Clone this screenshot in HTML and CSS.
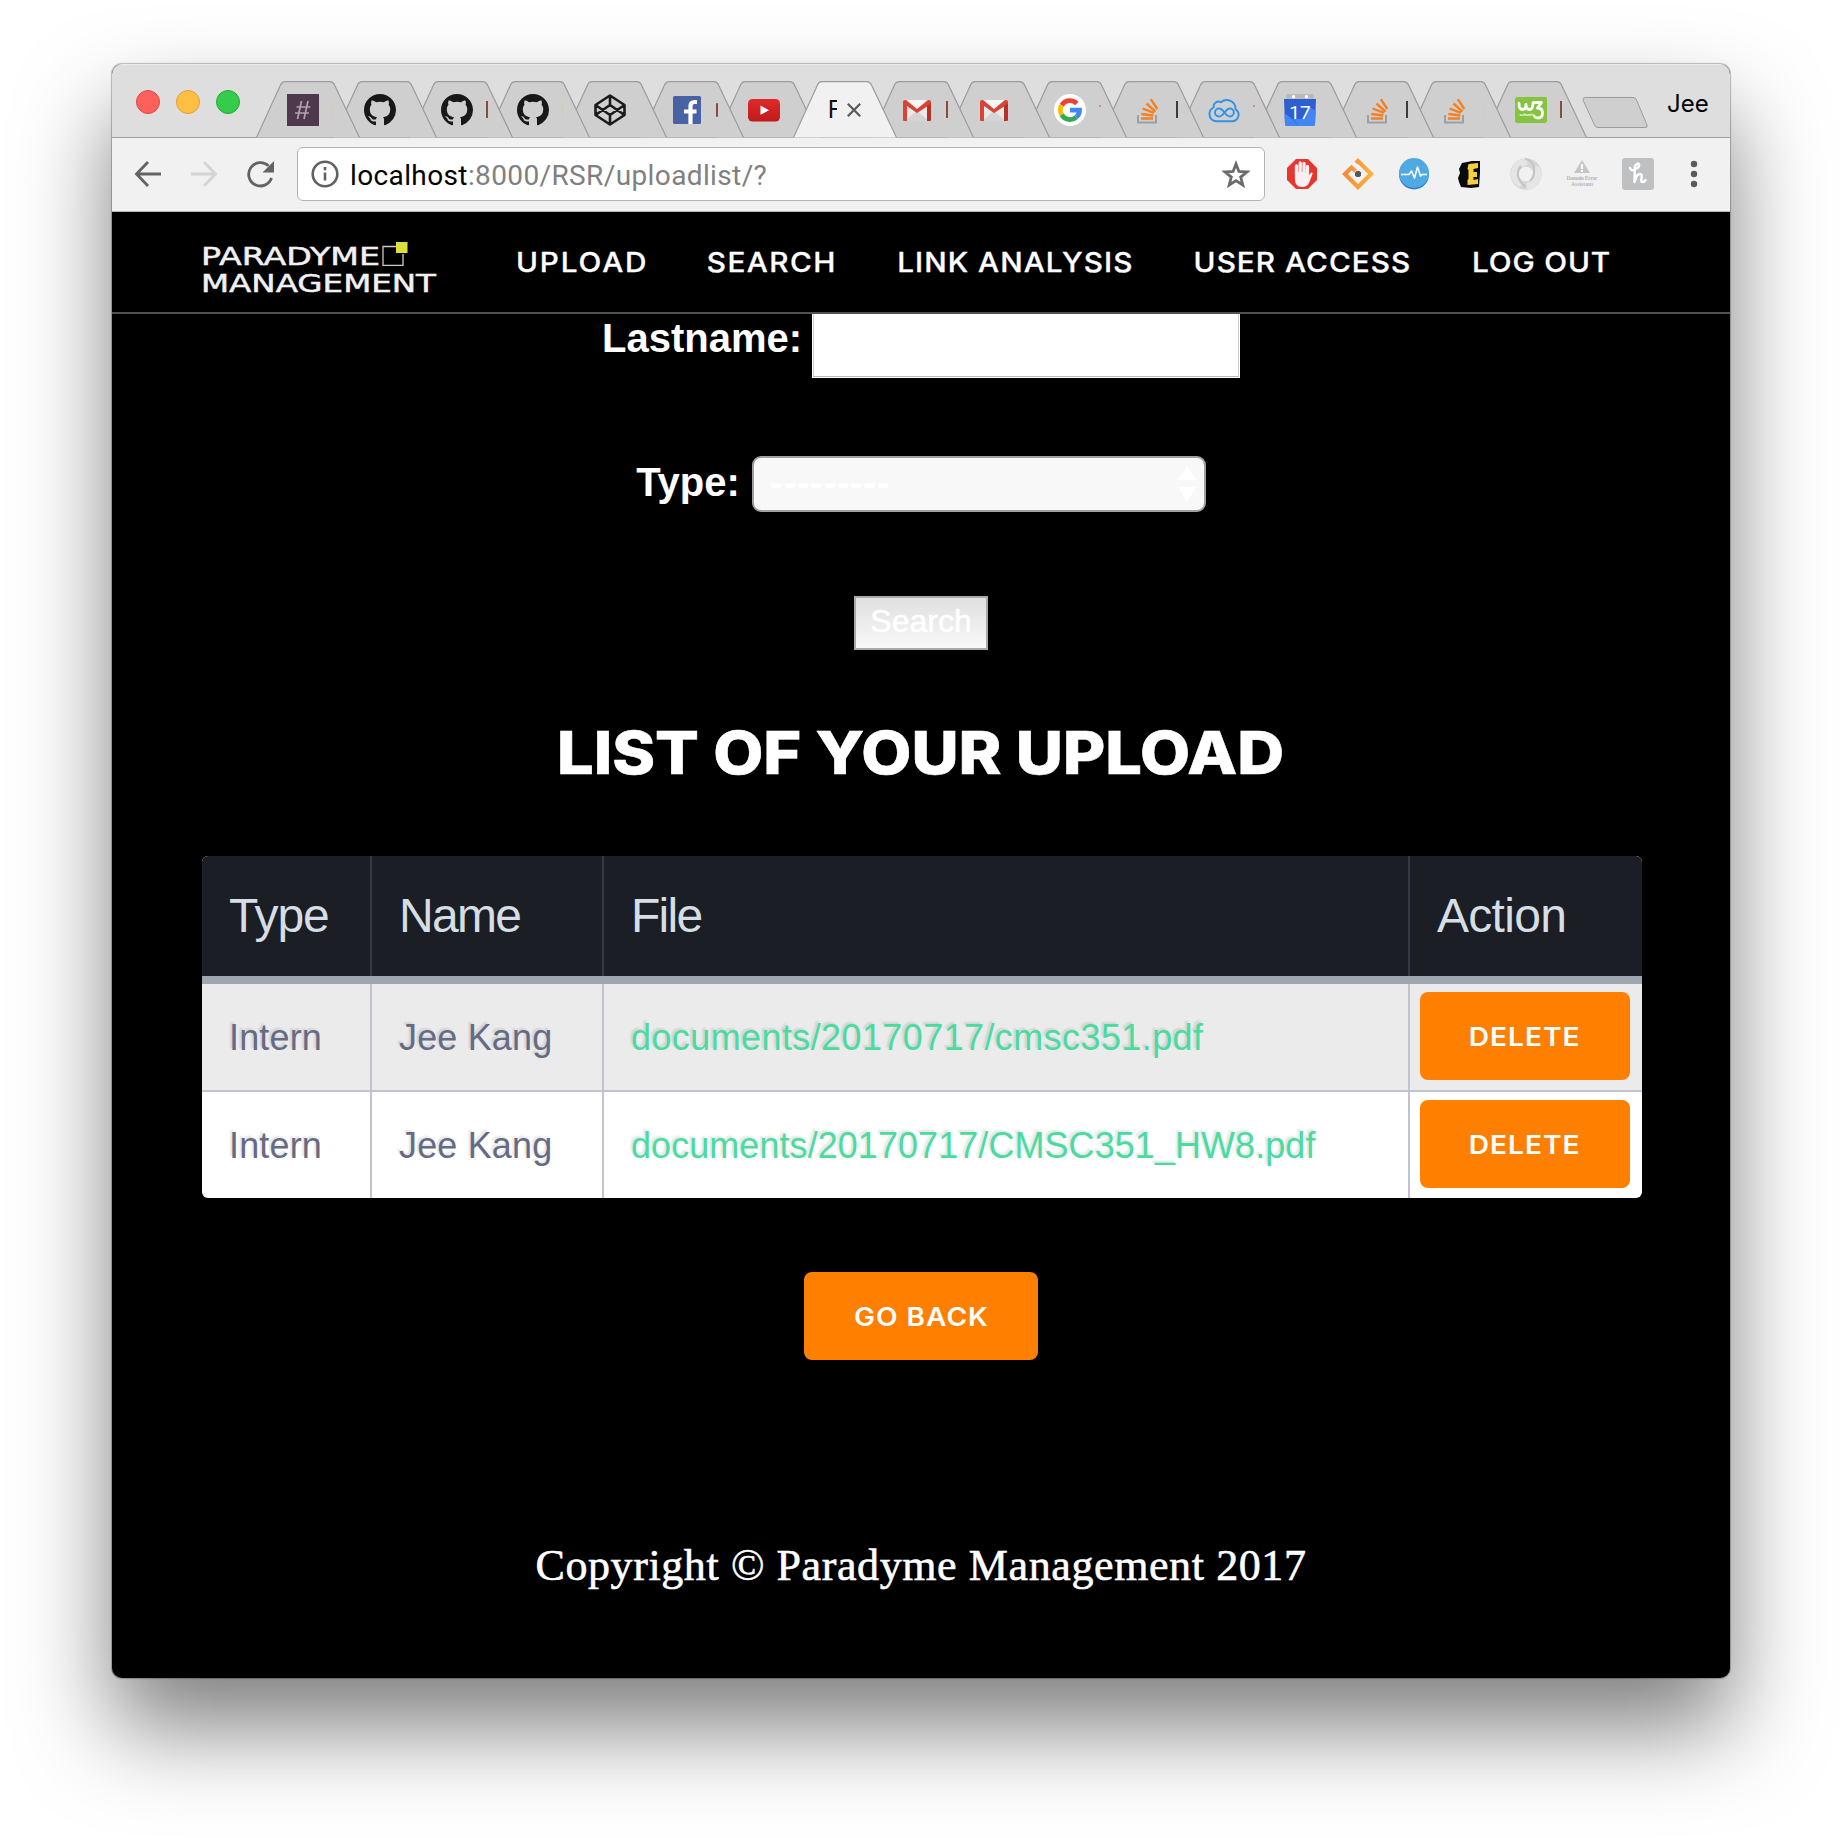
FILE: index.html
```html
<!DOCTYPE html>
<html lang="en">
<head>
<meta charset="utf-8">
<title>RSR</title>
<link rel="stylesheet" href="styles.css">
</head>
<body>
<svg class="defs" width="0" height="0">
  <defs>
    <symbol id="tab" viewBox="0 0 104 57"><path d="M0.5 56.5 L24.5 4 Q26 .7 29 .7 H74 Q77 .7 78.500 4 L103.500 56.500" /></symbol>
    <symbol id="github" viewBox="0 0 16 16"><path fill="#191717" fill-rule="evenodd" d="M8 0C3.580 0 0 3.580 0 8c0 3.540 2.290 6.530 5.470 7.590.4.070.55-.170.55-.380 0-.190-.010-.820-.010-1.490-2.010.37-2.530-.490-2.690-.940-.090-.230-.480-.940-.820-1.130-.280-.150-.680-.520-.010-.530.630-.010 1.080.580 1.230.820.720 1.210 1.870.870 2.330.660.070-.520.280-.870.510-1.070-1.780-.2-3.640-.890-3.640-3.950 0-.870.310-1.590.820-2.150-.080-.2-.360-1.020.080-2.120 0 0 .670-.210 2.200.820.640-.180 1.320-.270 2-.270.680 0 1.360.090 2 .270 1.530-1.040 2.200-.820 2.200-.820.440 1.100.160 1.920.080 2.120.510.560.820 1.270.820 2.150 0 3.070-1.870 3.750-3.650 3.950.290.250.540.730.540 1.480 0 1.070-.010 1.930-.010 2.200 0 .210.150.460.550.380A8.013 8.013 0 0 0 16 8c0-4.420-3.580-8-8-8z"/></symbol>
    <symbol id="gmail" viewBox="0 0 32 32"><path fill="#e9e9e9" d="M4 6h24v21H4z"/><path fill="#d4d4d4" d="M4 27l12-10 12 10z"/><path fill="#f6f6f6" d="M6 6h20L16 16z"/><path fill="#d94336" d="M2 8q0-2 2-2h1l11 9L27 6h1q2 0 2 2v2L16 19 6 12v15H3q-1 0-1-1z"/><path fill="#b93027" d="M26 12l4-3v17q0 1-1 1h-3z"/></symbol>
    <symbol id="stack" viewBox="0 0 32 32"><path fill="none" stroke="#9aa0a8" stroke-width="2" d="M7 21v7.500h18V21"/><path fill="none" stroke="#f48024" stroke-width="2.400" d="M10 24.500h12M10.300 20l12 1.500M11.600 14.500l11.300 4.300M15.500 9.500l9 8.200M19.800 5.200l6.500 9.800"/></symbol>
  </defs>
</svg>

<div class="window">
  <header class="tabstrip">
    <div class="lights"><i class="light red"></i><i class="light yellow"></i><i class="light green"></i></div>
    <div class="tabs">
      <div class="tab"><svg class="shape"><use href="#tab"/></svg><svg class="fav" viewBox="0 0 32 32"><path fill="#4d394b" d="M0 0h32v32H0z"/><path stroke="#b49fb2" stroke-width="1.700" d="M14.500 7l-4 18M21 7l-4 18M9.500 13h14M8 19h14"/></svg><i class="sliver faint"></i></div>
      <div class="tab"><svg class="shape"><use href="#tab"/></svg><svg class="fav"><use href="#github"/></svg></div>
      <div class="tab"><svg class="shape"><use href="#tab"/></svg><svg class="fav"><use href="#github"/></svg><i class="sliver rust"></i></div>
      <div class="tab"><svg class="shape"><use href="#tab"/></svg><svg class="fav"><use href="#github"/></svg><i class="sliver faint"></i></div>
      <div class="tab"><svg class="shape"><use href="#tab"/></svg><svg class="fav" viewBox="0 0 32 32"><path fill="none" stroke="#1b1b1b" stroke-width="2.600" stroke-linejoin="round" d="M16 1.500L30.500 11v10L16 30.500 1.500 21V11zM16 1.500V11M16 21v9.500M1.500 11L16 21l14.500-10M1.500 21L16 11l14.500 10"/></svg></div>
      <div class="tab"><svg class="shape"><use href="#tab"/></svg><svg class="fav" viewBox="0 0 32 32"><rect x="2" y="2" width="28" height="28" rx="1.500" fill="#4862a3"/><path fill="none" stroke="#fff" stroke-width="4.200" d="M19.500 30V12q0-4 4-4h2.500M13 17.500h12.500"/></svg><i class="sliver rust short"></i></div>
      <div class="tab"><svg class="shape"><use href="#tab"/></svg><svg class="fav" viewBox="0 0 32 32"><defs><linearGradient id="yt" x2="0" y2="1"><stop stop-color="#e02a29"/><stop offset="1" stop-color="#c01a1e"/></linearGradient></defs><rect y="5" width="32" height="22.500" rx="4.500" fill="url(#yt)"/><path fill="#fff" d="M12.500 11.500l8.500 4.700-8.500 4.600z"/></svg></div>
      <div class="tab active"><svg class="shape"><use href="#tab"/></svg><span class="title">F</span><svg class="close" viewBox="0 0 14 14"><path d="M.8.8l12.400 12.400M13.200.8L.8 13.200"/></svg></div>
      <div class="tab"><svg class="shape"><use href="#tab"/></svg><svg class="fav"><use href="#gmail"/></svg><i class="sliver rust"></i></div>
      <div class="tab"><svg class="shape"><use href="#tab"/></svg><svg class="fav"><use href="#gmail"/></svg></div>
      <div class="tab"><svg class="shape"><use href="#tab"/></svg><svg class="fav" viewBox="0 0 32 32"><circle cx="16" cy="16" r="16" fill="#fff"/><g fill="none" stroke-width="4.800"><path stroke="#ea4335" d="M22.800 9.500A9.600 9.600 0 0 0 7.700 11.200"/><path stroke="#fbbc05" d="M7.700 11.200a9.600 9.600 0 0 0 0 9.600"/><path stroke="#34a853" d="M7.700 20.800a9.600 9.600 0 0 0 14.600 2.400"/><path stroke="#4285f4" d="M22.300 23.200A9.300 9.300 0 0 0 25.500 16.200H16"/></g></svg><i class="sliver dot"></i></div>
      <div class="tab"><svg class="shape"><use href="#tab"/></svg><svg class="fav"><use href="#stack"/></svg><i class="sliver dark"></i></div>
      <div class="tab"><svg class="shape"><use href="#tab"/></svg><svg class="fav" viewBox="0 0 32 32"><g fill="none" stroke="#2f93ea" stroke-width="1.900"><path d="M8 27.200h16.500a6.500 6.500 0 0 0 3-12A8.800 8.800 0 0 0 13 8.200a5 5 0 0 0-7.300 5.300A7.200 7.200 0 0 0 8 27.200z"/><path d="M16.500 18.500q-3-4-5.500-4a4 4 0 0 0 0 8q2.500 0 5.500-4t5.300-4a4 4 0 0 1 0 8q-2.300 0-5.300-4z"/></g></svg><i class="sliver dot"></i></div>
      <div class="tab"><svg class="shape"><use href="#tab"/></svg><svg class="fav" viewBox="0 0 32 32"><path fill="#b9bbbd" d="M2 2q0-2 2-2h24q2 0 2 2v4H2z"/><path fill="#2e5fd0" d="M0 5h32l-1 25q0 2-2 2H3q-2 0-2-2z"/><path fill="#4285f4" d="M.5 19L8 25l7 7H3q-2 0-2-2zM24 12l7.700 5L31 30q0 2-2 2H15l-6-7h13z"/><circle cx="9.500" cy="2.700" r="1.700" fill="#fff"/><circle cx="22.500" cy="2.700" r="1.700" fill="#fff"/><text x="16" y="25" text-anchor="middle" class="cal">17</text></svg></div>
      <div class="tab"><svg class="shape"><use href="#tab"/></svg><svg class="fav"><use href="#stack"/></svg><i class="sliver dark"></i></div>
      <div class="tab"><svg class="shape"><use href="#tab"/></svg><svg class="fav"><use href="#stack"/></svg><i class="sliver faint"></i></div>
      <div class="tab"><svg class="shape"><use href="#tab"/></svg><svg class="fav" viewBox="0 0 32 32"><rect y="3" width="32" height="26" rx="2" fill="#86c440"/><path fill="none" stroke="#fff" stroke-width="2.800" stroke-linecap="round" stroke-linejoin="round" d="M4 9.500q0 6 3.500 6t3.500-5q0 5 3.500 5t3.500-6.500M19.500 8.500h7L22.500 14q5 0 5 5t-4.500 5q-2.500 0-3.500-1.500"/><text x="4.500" y="21.500" class="w3">schools</text></svg><i class="sliver rust"></i></div>
    </div>
    <svg class="newtab" width="66" height="32" viewBox="0 0 66 32"><path fill="#cfcfcf" stroke="#9b9b9b" d="M3.500.5H51q2.500 0 3.500 2.500l10.500 25q1 2.500-2 2.500H16q-2.500 0-3.500-2.500L1 3Q.5.500 3.500.5z"/></svg>
    <span class="profile">Jee</span>
  </header>

  <div class="toolbar">
    <svg class="nav-icon" viewBox="0 0 28 28"><path d="M27 14H3M14 2L2.500 14 14 26"/></svg>
    <svg class="nav-icon off" viewBox="0 0 28 28"><path d="M1 14h24M14 2l11.500 12L14 26"/></svg>
    <svg class="nav-icon" viewBox="0 0 28 28"><path d="M25.500 18A11.700 11.700 0 1 1 22.500 5.800"/><path class="solid" d="M28 1v11.500H16.500z"/></svg>
    <div class="omnibox">
      <svg class="info" viewBox="0 0 28 28"><circle cx="14" cy="14" r="12.300"/><path d="M14 12.500v8M14 7v3.200"/></svg>
      <span class="url">localhost<span class="rest">:8000/RSR/uploadlist/?</span></span>
      <svg class="star" viewBox="0 0 30 29"><path d="M15 4l2.900 7.500 8.100.4-6.300 5.200 2.100 7.900-6.800-4.400L8.200 25l2.100-7.900L4 11.900l8.100-.4z"/></svg>
    </div>
    <div class="extensions">
      <svg viewBox="0 0 32 32"><path fill="#e8352e" d="M10 1h12l9 9v12l-9 9H10l-9-9V10z"/><path fill="none" stroke="#f6f1f0" stroke-width="3.300" stroke-linecap="round" d="M10.500 17V8M14.200 15V5M18 15V5.500M21.500 17V8.500"/><path fill="#f6f1f0" d="M8.900 14h14.200v3.500l1.600-2.500q1.500-1 2 .5L23 25q-2 4-7 4-7 0-7.100-8z"/></svg>
      <svg viewBox="0 0 32 32"><defs><linearGradient id="dia" x2="1"><stop stop-color="#f58a3c"/><stop offset="1" stop-color="#fbb040"/></linearGradient></defs><path fill="none" stroke="url(#dia)" stroke-width="4.200" d="M14 5L16 3l13 13-13 13L3 16l6.500-6.500 4 3.500"/><path fill="#58595b" d="M14.500 13h3l1.500 1.500v3L17.500 19h-3L13 17.500v-3z"/></svg>
      <svg viewBox="0 0 32 32"><circle cx="16" cy="16.500" r="15" fill="#2d80bb"/><circle cx="16" cy="15" r="15" fill="#4faae3"/><path fill="none" stroke="#fff" stroke-width="1.600" stroke-linejoin="round" d="M3 16.500h8l2.500-3.500 3 7 3-11 3 9 1.500-1.500h5"/></svg>
      <svg viewBox="0 0 32 32"><path fill="#0a0a0a" d="M8 5l10-2h8v12l-1 14-8 1-10-1-2-5-1-4 2-5-1-4z"/><path fill="#f6cf3c" d="M14.500 6l9.500-1v5l-4.500 1v3h3.500v5h-3.500v3l4.500-1v5l-10.500 1v-5l1-1V12l-1-1z"/></svg>
      <svg viewBox="0 0 32 32"><circle cx="16" cy="16" r="11.500" fill="none" stroke="#d6d6d6" stroke-width="8.500"/><path fill="none" stroke="#e5e5e5" stroke-width="7" stroke-linecap="round" d="M14 4.500A11.500 11.500 0 0 0 9 25M19 28a11.500 11.500 0 0 0 8-16"/><path fill="none" stroke="#c4c4c4" stroke-width="2" d="M15 1q8 1 9 9t-4 13M11 8q-4 4-3 10t8 11"/></svg>
      <svg viewBox="0 0 32 32"><path fill="#c6c6c6" d="M16 2l8 13H8z"/><path stroke="#fff" stroke-width="2" d="M16 6v5M16 12v2"/><text x="16" y="22" class="tiny" text-anchor="middle" textLength="31">Domain Error</text><text x="16" y="27.500" class="tiny" text-anchor="middle" textLength="22">Assistant</text></svg>
      <svg viewBox="0 0 32 32"><rect width="32" height="32" rx="3" fill="#bfc0c2"/><path fill="none" stroke="#fff" stroke-width="2.500" stroke-linecap="round" stroke-linejoin="round" d="M8 10q1 3.500 5 1.500 5-2.500 4-5t-4 1.500L12.500 24q2-8 5.500-8 2.500 0 1.500 4t1 4q2 0 3-2"/></svg>
    </div>
    <svg class="menu" width="8" height="28" viewBox="0 0 8 28"><circle cx="4" cy="4" r="3.200"/><circle cx="4" cy="14" r="3.200"/><circle cx="4" cy="24" r="3.200"/></svg>
  </div>

  <nav class="navbar">
    <svg class="brand" width="240" height="56" viewBox="0 0 240 56">
      <text x="-1" y="25" textLength="179" lengthAdjust="spacingAndGlyphs">PARADYME</text>
      <text x="-1" y="52" textLength="235" lengthAdjust="spacingAndGlyphs">MANAGEMENT</text>
      <path fill="none" stroke="#c9c9c9" stroke-width="1.300" d="M194 6.500h-13v18.800h20V14"/>
      <path fill="#dbe13c" d="M194 2h11.500v11H194z"/>
    </svg>
    <div class="links">
      <a class="upload">UPLOAD</a><a class="search">SEARCH</a><a class="analysis">LINK ANALYSIS</a><a class="access">USER ACCESS</a><a class="logout">LOG OUT</a>
    </div>
  </nav>

  <main class="page">
    <div class="field lastname"><label>Lastname:</label><input class="textbox" type="text"></div>
    <div class="field type"><label>Type:</label><div class="select"><span>---------</span><svg width="20" height="38" viewBox="0 0 20 38"><path fill="#fff" d="M10 0l9 15H1zM10 37l9-15H1z"/></svg></div></div>
    <button class="submit">Search</button>
    <h1>LIST OF YOUR UPLOAD</h1>
    <table class="uploads">
      <colgroup><col class="c-type"><col class="c-name"><col class="c-file"><col class="c-action"></colgroup>
      <thead><tr><th class="tight">Type</th><th class="snug">Name</th><th class="snug">File</th><th>Action</th></tr></thead>
      <tbody>
        <tr><td>Intern</td><td>Jee Kang</td><td><a class="loose">documents/20170717/cmsc351.pdf</a></td><td class="act"><button class="btn"><span>DELETE</span></button></td></tr>
        <tr><td>Intern</td><td>Jee Kang</td><td><a>documents/20170717/CMSC351_HW8.pdf</a></td><td class="act"><button class="btn"><span>DELETE</span></button></td></tr>
      </tbody>
    </table>
    <button class="btn back"><span>GO BACK</span></button>
    <footer>Copyright © Paradyme Management 2017</footer>
  </main>
</div>
</body>
</html>
```
FILE: styles.css
```css
* { box-sizing: border-box; }
body { margin: 0; min-height: 1838px; padding: 64px 0 0 112px; background: #fff; font-family: "Liberation Sans", Arial, sans-serif; }
.defs { position: absolute; }
button, input { font: inherit; padding: 0; margin: 0; border: 0; }

.window {
  width: 1618px; height: 1614px;
  border-radius: 10px; overflow: hidden; background: #000;
  box-shadow: 0 0 1px 1px rgba(0,0,0,.25), 0 50px 92px rgba(0,0,0,.5);
}

/* tab strip */
.tabstrip { display: flex; height: 74px; background: #dedede; border-bottom: 1px solid #9b9b9b; border-top: 1px solid #ececec; }
.lights { display: flex; gap: 16px; padding: 25px 0 0 24px; width: 144px; }
.light { width: 24px; height: 24px; border-radius: 50%; border: 1px solid; }
.red { background: #ff605c; border-color: #e2463f; }
.yellow { background: #ffbf42; border-color: #dfa033; }
.green { background: #35cb4b; border-color: #24a836; }
.tabs { display: flex; padding-top: 16px; width: 1333px; flex: none; }
.tab { position: relative; width: 104px; margin-right: -27.3px; height: 57px; flex: none; display: flex; padding: 13px 0 0 31.300px; }
.shape { position: absolute; left: 0; top: 0; width: 104px; height: 57px; fill: #cfcfcf; stroke: #9b9b9b; stroke-width: 1.200; }
.active { z-index: 20; }
.active .shape { fill: #f1f1f1; }
.tab:nth-child(1) { z-index: 17; } .tab:nth-child(2) { z-index: 16; } .tab:nth-child(3) { z-index: 15; }
.tab:nth-child(4) { z-index: 14; } .tab:nth-child(5) { z-index: 13; } .tab:nth-child(6) { z-index: 12; }
.tab:nth-child(7) { z-index: 11; } .tab:nth-child(9) { z-index: 9; } .tab:nth-child(10) { z-index: 8; }
.tab:nth-child(11) { z-index: 7; } .tab:nth-child(12) { z-index: 6; } .tab:nth-child(13) { z-index: 5; }
.tab:nth-child(14) { z-index: 4; } .tab:nth-child(15) { z-index: 3; } .tab:nth-child(16) { z-index: 2; }
.fav { position: relative; width: 32px; height: 32px; flex: none; }
.sliver { position: relative; width: 2px; height: 17px; margin: 7px 0 0 13px; }
.rust { background: #8a4a3e; }
.dark { background: #3c3a3c; }
.faint { background: #d6cab6; width: 1px; }
.short { height: 14px; margin-top: 9px; border-radius: 2px; }
.dot { background: #cf9a5e; height: 2px; margin-top: 11px; }
.title { position: relative; width: 9px; overflow: hidden; font: 24px/30px Inter, sans-serif; color: #111; margin: 1px 0 0 3.500px; }
.close { position: relative; width: 14px; height: 14px; margin: 9px 0 0 10px; stroke: #5a5a5a; stroke-width: 2.200; }
.newtab { margin: 32px 0 0 -7px; flex: none; }
.cal { font: 19px Roboto, sans-serif; fill: #fff; }
.w3 { font: bold 4px "Liberation Sans", sans-serif; fill: #fff; }
.tiny { font: bold 5.500px "Liberation Serif", serif; fill: #b5b5b5; }
.profile { font: 24px/30px Inter, sans-serif; color: #000; margin: 24px 0 0 19px; }

/* toolbar */
.toolbar { display: flex; align-items: center; height: 74px; background: #f1f1f1; border-bottom: 1px solid #b4b6b6; padding: 0 0 1px 22px; }
.nav-icon { width: 28px; height: 28px; margin-right: 28px; fill: none; stroke: #636363; stroke-width: 2.800; flex: none; }
.nav-icon .solid { fill: #636363; stroke: none; }
.nav-icon.off { stroke: #d4d4d4; }
.omnibox { display: flex; align-items: center; width: 968px; height: 54px; margin-left: -5px; border: 1px solid #b3b3b3; border-radius: 6px; background: #fff; padding: 0 13px; flex: none; }
.info { width: 28px; height: 28px; fill: none; stroke: #5f6060; stroke-width: 2.600; }
.url { font: 28px/34px Roboto, sans-serif; letter-spacing: .38px; margin-left: 11px; padding-top: 4px; color: #000; }
.rest { color: #808080; }
.star { width: 30px; height: 29px; margin-left: auto; fill: none; stroke: #6b6b6b; stroke-width: 2.800; }
.extensions { display: flex; gap: 24px; margin-left: 21px; }
.extensions svg { width: 32px; height: 32px; }
.menu { margin-left: 36px; fill: #5a5a5a; }

/* site navigation */
.navbar { display: flex; align-items: flex-start; height: 102px; border-bottom: 2px solid #505050; padding: 28px 0 0 90px; background: #000; }
.brand { width: 240px; height: 56px; flex: none; overflow: visible; fill: #f0f0f0; font: 25px "DejaVu Sans", sans-serif; }
.brand text { stroke: #f0f0f0; stroke-width: .5; }
.links { display: grid; grid-template-columns: 173.500px 173px 269.500px 253px auto; margin: 6px 0 0 74px; transform: scaleX(1.1); transform-origin: left; font: 500 27px/34px Inter, sans-serif; color: #fff; white-space: nowrap; -webkit-text-stroke: .3px #fff; }
.upload { letter-spacing: 1.700px; }
.search { letter-spacing: 1.300px; }
.analysis { letter-spacing: .95px; }
.access { letter-spacing: .95px; }
.logout { letter-spacing: .8px; }

/* search form */
.page { display: flex; flex-direction: column; align-items: center; }
.field { display: flex; color: #fff; font-size: 40px; }
label { font-weight: bold; line-height: 46px; }
.lastname label { padding-top: 1px; }
.textbox { width: 428px; height: 64px; margin-left: 10px; background: #fff; border: 1px solid #fff; border-top: 0; box-shadow: inset 0 -1px 0 #b9b9b9, inset 1px 0 0 #d0d0d0, inset -1px 0 0 #d0d0d0; }
.type { margin-top: 78px; }
.type label { padding-top: 3px; }
.select { display: flex; align-items: center; justify-content: space-between; width: 454px; height: 56px; margin-left: 12px; padding: 0 7px 0 16px; background: #f8f8f8; border: 2px solid #a0a0a0; border-radius: 9px; line-height: 46px; }
.select span { font-weight: bold; padding-bottom: 4px; }
.submit { width: 134px; height: 54px; margin-top: 84px; border: 2px solid #a9a9a9; background: linear-gradient(#e0e0e0, #f8f8f8); color: #fff; font-size: 32px; line-height: 36px; padding-bottom: 4px; -webkit-text-stroke: .5px #fff; }
h1 { font: 800 59px/72px Inter, sans-serif; color: #fff; margin: 67px 0; white-space: nowrap; transform: scaleX(1.1); -webkit-text-stroke: .6px #fff; }

/* uploads table */
.uploads { width: 1440px; margin-left: 2px; table-layout: fixed; border-spacing: 0; border-radius: 6px; overflow: hidden; background: #fff; }
.c-type { width: 170px; } .c-name { width: 232px; } .c-file { width: 806px; } .c-action { width: 232px; }
th {
  height: 128px; padding: 0 0 8px 27px; text-align: left; font-weight: normal; font-size: 48px; line-height: 56px; letter-spacing: -.7px; color: #d5dde5;
  background: linear-gradient(#9ea7af, #9ea7af) bottom / 100% 8px no-repeat, linear-gradient(#343a45, #343a45) right / 2px 100% no-repeat, #1b1e24;
}
th:last-child { background: linear-gradient(#9ea7af, #9ea7af) bottom / 100% 8px no-repeat, #1b1e24; }
th.tight { letter-spacing: -1.100px; }
th.snug { letter-spacing: -1.700px; }
td { height: 106px; padding: 2px 0 0 27px; border-right: 2px solid #c1c3d1; font-size: 36px; line-height: 42px; letter-spacing: .15px; color: #666b85; text-shadow: -2px -2px 2px rgba(0,0,0,.1); white-space: nowrap; }
td:last-child { border-right: 0; }
tbody tr:first-child td { background: #ebebeb; height: 108px; border-bottom: 2px solid #c1c3d1; }
td a { color: #4adb9f; letter-spacing: .06px; }
td a.loose { letter-spacing: .4px; }
td.act { padding: 0 0 2px 10px; }
.btn { display: block; width: 210px; height: 88px; border-radius: 8px; background: #ff8000; color: #fff; font: 600 26px/32px Inter, sans-serif; letter-spacing: .9px; text-shadow: none; }
.btn span { display: inline-block; padding-top: 2px; transform: scaleX(1.08); }
.back { width: 234px; margin-top: 74px; }
footer { margin-top: 180px; font: 44px/52px "Liberation Serif", serif; letter-spacing: .6px; -webkit-text-stroke: .6px #fff; color: #fff; white-space: nowrap; }
```
